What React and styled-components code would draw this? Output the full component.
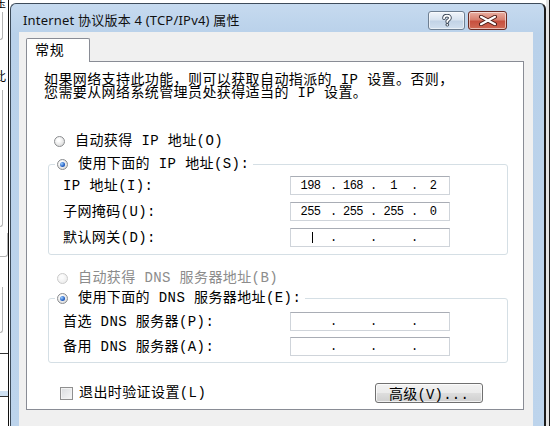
import React from "react";
import styled, { createGlobalStyle } from "styled-components";

const GlobalStyles = createGlobalStyle`
  html, body {
    margin: 0;
    padding: 0;
    background: #fff;
  }
  body {
    width: 550px;
    height: 426px;
    overflow: hidden;
  }
`;

const UI_FONT = `"Liberation Mono", "Noto Sans CJK SC", monospace`;

const Screen = styled.div`
  display: flex;
  width: 550px;
  height: 426px;
  overflow: hidden;
  font-family: ${UI_FONT};
  color: #000;
`;

/* bits of the window behind the dialog */
const Backdrop = styled.div`
  width: 8px;
  flex: none;
  margin-right: 1px;
  border-right: 1px solid #101010;
  overflow: hidden;
  display: flex;
  flex-direction: column;
  font-family: "Noto Sans CJK SC", sans-serif;
  font-size: 12px;
`;

const BackGlyph = styled.div`
  height: 12px;
  line-height: 12px;
  margin: ${(p) => p.$top}px 0 0 -6px;
  white-space: nowrap;
`;

const BackEdge = styled.div`
  flex: none;
  width: ${(p) => p.$w || 3}px;
  height: ${(p) => p.$h}px;
  margin-top: ${(p) => p.$top}px;
  box-sizing: border-box;
  border: 1px solid #b4b4b4;
  border-left: none;
  border-top: none;
  border-radius: 0 0 3px 0;
`;

const BackBar = styled.div`
  flex: none;
  height: 44px;
  margin-top: ${(p) => p.$top}px;
  border-top: 1px solid #333;
  border-bottom: 1px solid #333;
  box-sizing: border-box;
  background: linear-gradient(#fff 0 37px, #cfe1f3 37px);
`;

const RightEdge = styled.div`
  width: 4px;
  flex: none;
  background: linear-gradient(to right, #e4e4e4 0 3px, #1a1a1a 3px);
`;

const Window = styled.div`
  width: 536px;
  height: 430px;
  flex: none;
  margin-top: 3px;
  box-sizing: border-box;
  border: 1px solid #3e4c5b;
  border-right: 2px solid #1b1b1b;
  border-bottom: none;
  border-radius: 6px 6px 0 0;
  background: linear-gradient(#c6daef, #b9d1ea 30px, #bdd4ec);
  padding: 0 11px 0 8px;
  display: flex;
  flex-direction: column;
`;

const TitleBar = styled.div`
  height: 28px;
  flex: none;
  display: flex;
  align-items: flex-end;
  padding: 0 26px 2px 4px;
  box-sizing: border-box;
`;

const Title = styled.div`
  flex: 1;
  font-family: "Noto Sans", "Noto Sans CJK SC", sans-serif;
  font-size: 13px;
  line-height: 19px;
  letter-spacing: 0.2px;
  color: #111;
  white-space: nowrap;
`;

const CaptionButtons = styled.div`
  display: flex;
  gap: 3px;
`;

const CaptionButton = styled.div`
  width: ${(p) => p.$w}px;
  height: 19px;
  box-sizing: border-box;
  border-radius: 3px;
  border: 1px solid ${(p) => (p.$close ? "#6a2a22" : "#6e7f92")};
  background: ${(p) =>
    p.$close
      ? "linear-gradient(#eab0a2, #d8806f 45%, #c7503f 55%, #cf6a55)"
      : "linear-gradient(#f1f5fa, #d9e4f0 45%, #c2d3e6 55%, #d2e0ef)"};
  box-shadow: inset 0 0 0 1px rgba(255, 255, 255, 0.55);
  display: flex;
  align-items: center;
  justify-content: center;
`;

const Face = styled.div`
  flex: 1;
  background: #f0f0f0;
  padding: 6px 9px 0 7px;
  display: flex;
  flex-direction: column;
  overflow: hidden;
`;

const Tab = styled.div`
  width: 64px;
  height: 24px;
  box-sizing: border-box;
  position: relative;
  z-index: 1;
  margin-bottom: -1px;
  border: 1px solid #898c95;
  border-bottom: none;
  border-radius: 2px 2px 0 0;
  background: #fff;
  padding: 2px 0 0 8px;
  font-size: 14px;
  line-height: 20px;
  letter-spacing: 0.8px;
`;

const TabPage = styled.div`
  width: 498px;
  height: 349px;
  flex: none;
  box-sizing: border-box;
  border: 1px solid #898c95;
  background: #fff;
  display: flex;
  flex-direction: column;
`;

const Intro = styled.p`
  margin: 12px 0 0 17px;
  font-size: 14px;
  line-height: 13px;
  letter-spacing: 0.4px;
  white-space: nowrap;
`;

const Option = styled.div`
  display: flex;
  align-items: center;
  gap: 10px;
  height: 16px;
  margin: ${(p) => p.$top}px 0 0 ${(p) => p.$left}px;
`;

const Radio = styled.span`
  width: 11px;
  height: 11px;
  flex: none;
  box-sizing: border-box;
  border-radius: 50%;
  border: 1px solid ${(p) => (p.$disabled ? "#cbcbcb" : "#8a8c8f")};
  background: ${(p) =>
    p.$disabled
      ? "radial-gradient(circle at 40% 35%, #fbfbfb 20%, #e6e6e6)"
      : "radial-gradient(circle at 40% 35%, #ffffff 15%, #cfcfcf)"};
  display: flex;
  align-items: center;
  justify-content: center;

  &::after {
    content: "";
    display: ${(p) => (p.$checked ? "block" : "none")};
    width: 5px;
    height: 5px;
    border-radius: 50%;
    background: radial-gradient(circle at 35% 35%, #9fd0ff, #2460c4 60%, #133f8c);
  }
`;

const Label = styled.span`
  font-size: 14px;
  line-height: 16px;
  letter-spacing: 0.4px;
  white-space: nowrap;
  color: ${(p) => (p.$disabled ? "#8c8c8c" : "#000")};
`;

const Group = styled.fieldset`
  margin: ${(p) => p.$top}px 0 0 21px;
  width: 460px;
  min-width: 0;
  box-sizing: border-box;
  border: 1px solid #d5dfe5;
  border-radius: 3px;
  padding: 0 0 ${(p) => p.$bottom}px 14px;
`;

const Legend = styled.legend`
  display: flex;
  align-items: center;
  gap: 10px;
  height: 16px;
  padding: 0 4px 0 2px;
  margin-left: -8px;
`;

const FieldList = styled.div`
  display: flex;
  flex-direction: column;
  gap: ${(p) => p.$gap}px;
  padding-top: ${(p) => p.$top}px;
`;

const FieldRow = styled.div`
  display: grid;
  grid-template-columns: 227px 160px;
  align-items: center;
  height: 19px;
`;

const IpBox = styled.div`
  width: 160px;
  height: 19px;
  box-sizing: border-box;
  border: 1px solid #cfd4da;
  border-top-color: #a9adb5;
  background: #fff;
  display: flex;
  align-items: center;
  font-size: 12px;
  letter-spacing: -0.6px;
`;

const Octet = styled.span`
  width: ${(p) => p.$w}px;
  flex: none;
  display: flex;
  justify-content: center;
  align-items: center;
  height: 17px;
`;

const Dot = styled.span`
  width: 6px;
  flex: none;
  text-align: center;
`;

const Caret = styled.span`
  width: 1px;
  height: 11px;
  margin-left: 3px;
  background: #000;
`;

const Footer = styled.div`
  display: flex;
  align-items: center;
  height: 20px;
  margin: 20px 40px 0 33px;
`;

const CheckOption = styled.div`
  display: flex;
  align-items: center;
  gap: 6px;
`;

const CheckBox = styled.span`
  width: 13px;
  height: 13px;
  box-sizing: border-box;
  border: 1px solid #8f8f8f;
  background: linear-gradient(135deg, #d9dbde, #f7f7f7);
  box-shadow: inset 0 0 0 1px #f2f2f2;
`;

const PushButton = styled.div`
  margin-left: auto;
  width: 108px;
  height: 20px;
  box-sizing: border-box;
  border: 1px solid #707070;
  border-radius: 3px;
  background: linear-gradient(#f2f2f2, #ebebeb 48%, #dddddd 52%, #cfcfcf);
  box-shadow: inset 0 0 0 1px rgba(255, 255, 255, 0.7);
  display: flex;
  align-items: center;
  justify-content: center;
  font-size: 14px;
  letter-spacing: 0.2px;
`;

const HelpIcon = () => (
  <svg width="14" height="13" viewBox="0 0 14 13">
    <g fill="none" strokeLinecap="round" strokeLinejoin="round">
      <path d="M4 4.2C4 2.4 5.4 1.6 7 1.6s3 .9 3 2.4c0 1.6-1.9 1.9-2.7 3v.9" stroke="#3b4756" strokeWidth="3.6" />
      <path d="M4 4.2C4 2.4 5.4 1.6 7 1.6s3 .9 3 2.4c0 1.6-1.9 1.9-2.7 3v.9" stroke="#fff" strokeWidth="1.8" />
    </g>
    <circle cx="7.3" cy="10.8" r="1.8" fill="#3b4756" />
    <circle cx="7.3" cy="10.8" r="0.9" fill="#fff" />
  </svg>
);

const CloseIcon = () => (
  <svg width="18" height="11" viewBox="0 0 18 11">
    <g strokeLinecap="round">
      <path d="M2 1.8L16 9.2M16 1.8L2 9.2" stroke="#4a1a14" strokeWidth="4" />
      <path d="M2 1.8L16 9.2M16 1.8L2 9.2" stroke="#fff" strokeWidth="2.2" />
    </g>
  </svg>
);

const OCTET_WIDTHS = [39, 34, 35, 32];

const IpField = ({ parts = ["", "", "", ""], caret }) => (
  <IpBox>
    {parts.map((part, i) => (
      <React.Fragment key={i}>
        <Octet $w={OCTET_WIDTHS[i]}>
          {caret && i === 0 ? <Caret /> : part}
        </Octet>
        {i < 3 && <Dot>.</Dot>}
      </React.Fragment>
    ))}
  </IpBox>
);

const ipRows = [
  { label: "IP 地址(I):", parts: ["198", "168", "1", "2"] },
  { label: "子网掩码(U):", parts: ["255", "255", "255", "0"] },
  { label: "默认网关(D):", caret: true },
];

const dnsRows = [
  { label: "首选 DNS 服务器(P):" },
  { label: "备用 DNS 服务器(A):" },
];

function App() {
  return (
    <>
      <GlobalStyles />
      <Screen>
        <Backdrop>
          <BackGlyph $top={-3}>压</BackGlyph>
          <BackEdge $top={3} $h={28} />
          <BackGlyph $top={30}>此</BackGlyph>
          <BackEdge $top={8} $h={137} />
          <BackEdge $top={6} $h={24} $w={8} />
          <BackEdge $top={30} $h={46} />
          <BackBar $top={20} />
        </Backdrop>

        <Window>
          <TitleBar>
            <Title>Internet 协议版本 4 (TCP/IPv4) 属性</Title>
            <CaptionButtons>
              <CaptionButton $w={37}>
                <HelpIcon />
              </CaptionButton>
              <CaptionButton $w={39} $close>
                <CloseIcon />
              </CaptionButton>
            </CaptionButtons>
          </TitleBar>

          <Face>
            <Tab>常规</Tab>
            <TabPage>
              <Intro>
                如果网络支持此功能，则可以获取自动指派的 IP 设置。否则，
                <br />
                您需要从网络系统管理员处获得适当的 IP 设置。
              </Intro>

              <Option $top={33} $left={27}>
                <Radio />
                <Label>自动获得 IP 地址(O)</Label>
              </Option>

              <Group $top={7} $bottom={7}>
                <Legend>
                  <Radio $checked />
                  <Label>使用下面的 IP 地址(S):</Label>
                </Legend>
                <FieldList $gap={7} $top={4}>
                  {ipRows.map((row) => (
                    <FieldRow key={row.label}>
                      <Label>{row.label}</Label>
                      <IpField parts={row.parts} caret={row.caret} />
                    </FieldRow>
                  ))}
                </FieldList>
              </Group>

              <Option $top={15} $left={30}>
                <Radio $disabled />
                <Label $disabled>自动获得 DNS 服务器地址(B)</Label>
              </Option>

              <Group $top={4} $bottom={6}>
                <Legend>
                  <Radio $checked />
                  <Label>使用下面的 DNS 服务器地址(E):</Label>
                </Legend>
                <FieldList $gap={6} $top={6}>
                  {dnsRows.map((row) => (
                    <FieldRow key={row.label}>
                      <Label>{row.label}</Label>
                      <IpField />
                    </FieldRow>
                  ))}
                </FieldList>
              </Group>

              <Footer>
                <CheckOption>
                  <CheckBox />
                  <Label>退出时验证设置(L)</Label>
                </CheckOption>
                <PushButton>高级(V)...</PushButton>
              </Footer>
            </TabPage>
          </Face>
        </Window>
        <RightEdge />
      </Screen>
    </>
  );
}

export default App;
